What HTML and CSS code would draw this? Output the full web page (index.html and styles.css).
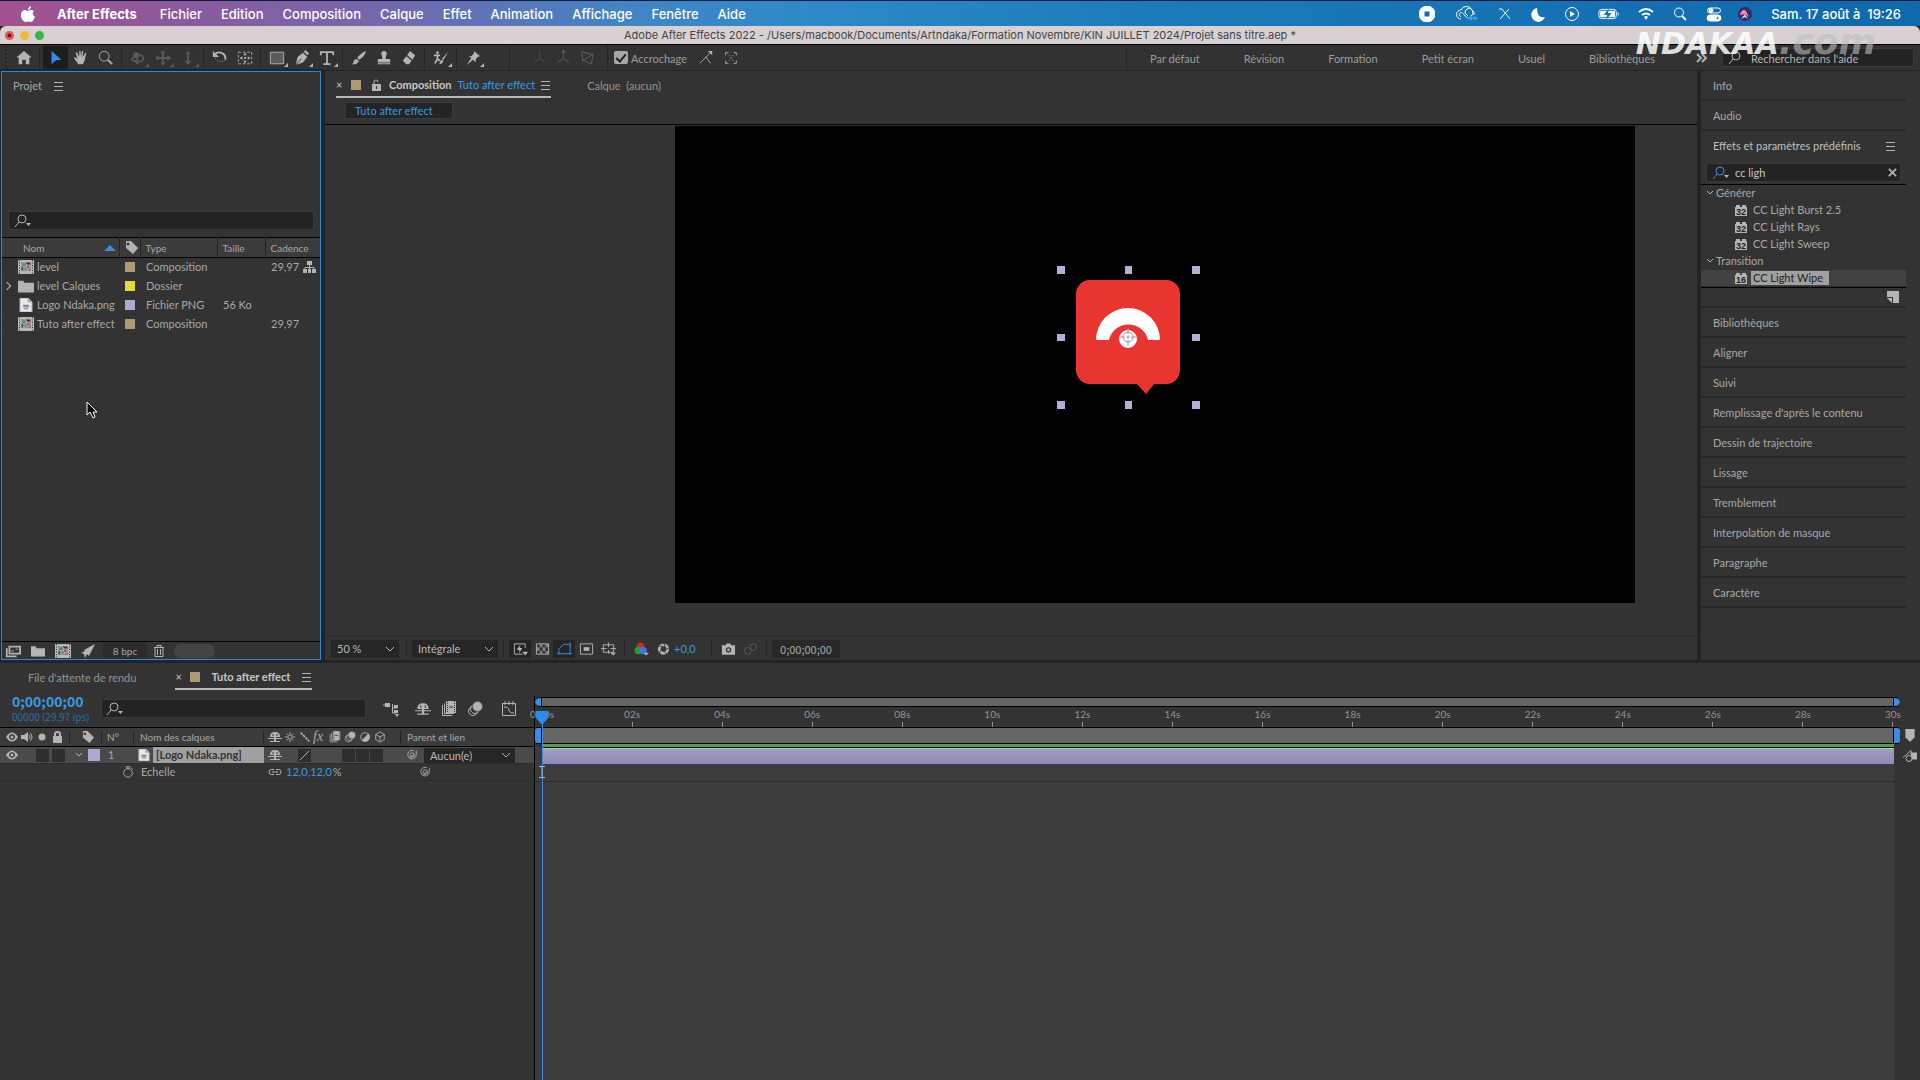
FILE: index.html
```
<!DOCTYPE html>
<html lang="fr">
<head>
    <meta charset="UTF-8">
    <meta name="viewport" content="width=device-width, initial-scale=1.0">
    <title>Adobe After Effects 2022 - Projet sans titre.aep</title>
    <link rel="stylesheet" href="styles.css">
</head>
<body>
    <!-- Shared icons -->
    <svg class="defs" aria-hidden="true">
        <symbol id="search" viewBox="0 0 18 14"><circle cx="8" cy="5" r="4"/><path d="M5 8L1 13"/><path class="solid" d="M12 9h5l-2.500 3z"/></symbol>
        <symbol id="menu" viewBox="0 0 10 10"><path d="M0 1.500h9M0 5.500h9M0 9.500h9"/></symbol>
        <symbol id="comp" viewBox="0 0 16 14"><path fill="#b9b9b9" d="M0 0h16v14H0z"/><path fill="#333" d="M3 2h10v9H3z"/><path stroke="#333" stroke-dasharray="1 1.500" d="M1.500 0v14M14.500 0v14"/><circle cx="6" cy="5" r="2.500" fill="#5b8a68"/><path fill="#bd4f45" d="M8 5h4v4H8z"/><path fill="#4678b8" d="M5 10l2.500-4 3 4z"/></symbol>
        <symbol id="folder" viewBox="0 0 15 12"><path class="solid" d="M0 1h5l1 2h9v9H0z"/></symbol>
        <symbol id="file" viewBox="0 0 12 14"><path fill="#e8e8ee" d="M0 0h8l4 4v10H0z"/><path fill="#9a9ab8" d="M8 0v4h4z"/><path fill="#485c9c" d="M3 7h6v2H3zM4 10h4v1H4z"/></symbol>
        <symbol id="tag" viewBox="0 0 13 13"><path class="solid" fill-rule="evenodd" d="M1 0h5l7 7-5 6-7-6zM3 1.500a1.500 1.500 0 1 0 .1 0z"/></symbol>
        <symbol id="eye" viewBox="0 0 12 10"><path class="solid" fill-rule="evenodd" d="M0 5q6-9 12 0-6 9-12 0zM6 2a3 3 0 1 0 .1 0z"/><circle class="solid" cx="6" cy="5" r="1.500"/></symbol>
        <symbol id="shy" viewBox="0 0 14 12"><path class="solid" d="M2 6q0-5 5-5t5 5zM6 6h2v5H6zM0 7h14v1H0zM2 10h10v1H2z"/><path stroke="#333" d="M5 3v2M9 3v2"/></symbol>
        <symbol id="frames" viewBox="0 0 16 16"><path d="M1.500 4v10.500H11M3.500 2.500v10H13"/><path class="solid" d="M5 0h10v12H5z"/><path stroke="#333" stroke-dasharray="1 1" d="M6.500 0v12M13.500 0v12"/><path stroke="#333" d="M8 6h4"/></symbol>
        <symbol id="blur" viewBox="0 0 16 16"><circle cx="6" cy="10" r="4.500"/><circle cx="8" cy="8" r="4.500"/><circle fill="#b4b4b4" cx="10.500" cy="5.500" r="5" stroke="#555"/></symbol>
        <symbol id="spiral" viewBox="0 0 14 12"><path d="M12 1v4a5 5 0 1 1-3-4M9 5.500a2 2 0 1 1-2-2 3 3 0 0 1 3 3 3.500 3.500 0 0 1-6 1"/></symbol>
        <symbol id="chev" viewBox="0 0 8 6"><path d="M1 1l3 3 3-3"/></symbol>
        <symbol id="brick" viewBox="0 0 12 11"><path class="solid" d="M0 2h1V0h4v2h2V0h4v2h1v9H0z"/></symbol>
    </svg>

    <header class="menubar">
        <nav>
            <svg class="apple" viewBox="0 0 14 16"><path fill="#fff" d="M10 0q0 3-3 4 0-3 3-4zM7 5q3-2 6 0-3 3 1 6-2 5-4 5-3-1-5 0-3 0-5-5-1-5 3-7 2 0 4 1z"/></svg>
            <a href="#" class="app">After Effects</a>
            <a href="#">Fichier</a>
            <a href="#">Edition</a>
            <a href="#">Composition</a>
            <a href="#">Calque</a>
            <a href="#">Effet</a>
            <a href="#">Animation</a>
            <a href="#">Affichage</a>
            <a href="#">Fenêtre</a>
            <a href="#">Aide</a>
        </nav>
        <div class="status">
            <svg viewBox="0 0 16 16"><circle cx="8" cy="8" r="8" fill="#fff"/><rect x="5" y="5" width="6" height="6" rx="1" fill="#156fb4"/></svg>
            <svg class="wide" viewBox="0 0 22 16"><path d="M5 13a4.500 4.500 0 0 1 0-9 6 6 0 0 1 11 0 4.500 4.500 0 0 1 2 5M5 10.500a2 2 0 1 1 2-3l5 5M15 10a4 4 0 1 0-6-3l3 3"/><path fill="#39a5ee" stroke="none" d="M14 9l4 3-4 3v-2h-3v-2h3zM22 12l-4 3v-5z"/></svg>
            <svg viewBox="0 0 16 16"><path d="M3 3h3l8 10M13 3L4 13"/></svg>
            <svg viewBox="0 0 16 16"><path class="white" d="M7 2a7 7 0 1 0 8 9Q7 13 7 2z"/></svg>
            <svg viewBox="0 0 16 16"><circle cx="8" cy="8" r="6.500"/><path class="white" d="M6 5l5 3-5 3z"/></svg>
            <svg class="wide" viewBox="0 0 24 14"><rect x="1" y="2" width="19" height="10" rx="3"/><rect x="3" y="4" width="15" height="6" fill="#fff"/><path fill="#1b70b2" stroke="none" d="M12 1L6 8h4l-1 5 6-7h-4z"/><path d="M22 5.500v3"/></svg>
            <svg viewBox="0 0 16 14"><path stroke-width="2" d="M1 5q7-6 14 0M4 8q4-3 8 0"/><path class="white" d="M6 10q2-2 4 0l-2 3z"/></svg>
            <svg viewBox="0 0 16 16"><circle cx="7" cy="6.500" r="4.500"/><path stroke-width="2" d="M10 10l4 4"/></svg>
            <svg class="center" viewBox="0 0 16 14"><rect x="1.500" y="1" width="13" height="5" rx="2.500"/><rect x="1" y="8" width="14" height="6" rx="3" fill="#fff"/><circle cx="5" cy="3.500" r="2" fill="#fff"/><circle cx="11.500" cy="11" r="1.500" fill="#1b70b2"/></svg>
            <svg viewBox="0 0 16 16"><circle cx="8" cy="8" r="7" fill="#3b2868" stroke="none"/><path fill="#f48cae" stroke="none" d="M3 9q2-7 6-4l3 6-4-3z"/><path fill="#b8eaff" stroke="none" d="M4 13l4-5 3 5-3-2z"/></svg>
            <time>Sam. 17 août à&nbsp; 19:26</time>
        </div>
    </header>

    <div class="titlebar">
        <div class="lights"><i class="red"></i><i class="yellow"></i><i class="green"></i></div>
        <h1>Adobe After Effects 2022 - /Users/macbook/Documents/Artndaka/Formation Novembre/KIN JUILLET 2024/Projet sans titre.aep *</h1>
    </div>
    <div class="watermark">NDAKAA<span>.com</span></div>

    <div class="toolbar">
        <div class="tools">
            <button aria-label="Accueil"><svg viewBox="0 0 18 18"><path class="solid" d="M9 1l8 7-1 1-1-1v8h-4v-5H7v5H3V8L2 9 1 8z"/></svg></button>
            <i class="sep"></i>
            <button class="active" aria-label="Sélection"><svg viewBox="0 0 18 18"><path d="M4 1l11 10-6 .5L4 16z" fill="#2d8ceb" stroke="none"/></svg></button>
            <button aria-label="Main"><svg viewBox="0 0 18 18"><path class="solid" d="M6 16L1 9l1-1 3 2L3 3l1.500-.5L7 8V1h1.500l.5 7 1-7h1.500L11 8l3-5 1 .5L13 12l-2 4z"/></svg></button>
            <button aria-label="Zoom"><svg viewBox="0 0 18 18"><circle cx="7" cy="7" r="5.500"/><path stroke-width="2" d="M11 11l5 5"/></svg></button>
            <i class="sep"></i>
            <button class="off more" aria-label="Orbite"><svg viewBox="0 0 18 18"><circle class="solid" cx="7" cy="6" r="3.500"/><path stroke-width="2" d="M4 8q-4 4 2 5h6q5-2 2-6l-3-2M9 10l-3 3 3 3"/></svg></button>
            <button class="off more" aria-label="Panoramique"><svg viewBox="0 0 18 18"><path stroke-width="2" d="M9 3v12M3 9h12"/><path class="solid" d="M9 0l3 4H6zM9 18l3-4H6zM0 9l4-3v6zM18 9l-4-3v6z"/></svg></button>
            <button class="off more" aria-label="Travelling"><svg viewBox="0 0 18 18"><path stroke-width="2" d="M9 3v12"/><path class="solid" d="M9 1l3 3H6zM9 17l4-5H5z"/></svg></button>
            <i class="sep"></i>
            <button aria-label="Rotation"><svg viewBox="0 0 18 18"><path stroke-width="2" d="M3 5a7 7 0 0 1 12 6"/><path stroke-dasharray="1 2" d="M15 11a7 7 0 0 1-12-4"/><path class="solid" d="M1 1v7h7z"/></svg></button>
            <button aria-label="Point d'ancrage"><svg viewBox="0 0 18 18"><path stroke-dasharray="3 2" d="M1.500 2.500h15v13h-15z"/><path class="solid" d="M9 3l2 3H7zM9 15l2-3H7zM3 9l3-2v4zM15 9l-3-2v4zM8 8h2v2H8z"/></svg></button>
            <i class="sep"></i>
            <button class="more" aria-label="Rectangle"><svg viewBox="0 0 18 18"><path fill="#5c5c5c" d="M1.500 2.500h15v13h-15z"/></svg></button>
            <button class="more" aria-label="Plume"><svg viewBox="0 0 18 18"><path class="solid" d="M2 17l2-9 6-5 5 5-5 6zM11 2l2-2 4 4-2 2z"/><path stroke="#333" d="M2 17l6-7"/></svg></button>
            <button class="more" aria-label="Texte"><svg viewBox="0 0 18 18"><path stroke-width="2" d="M2 6V2.500h14V6M9 3v13M5 16h8"/></svg></button>
            <i class="sep"></i>
            <button aria-label="Pinceau"><svg viewBox="0 0 18 18"><path class="solid" d="M17 1q-2 7-8 10L7 9q4-6 10-8zM6 10l3 2q-2 5-8 4 2-1 2-3t3-3z"/></svg></button>
            <button aria-label="Tampon"><svg viewBox="0 0 18 18"><path class="solid" d="M7 8q-3-7 2-7t2 7v2h5v4H2v-4h5zM2 15h14v1H2z"/></svg></button>
            <button aria-label="Gomme"><svg viewBox="0 0 18 18"><path class="solid" d="M10 1l6 5-3 5-6-5zM6 7l6 5-3 4H6l-4-4z"/></svg></button>
            <i class="sep"></i>
            <button class="more" aria-label="Roto-pinceau"><svg viewBox="0 0 18 18"><circle class="solid" cx="5" cy="3" r="1.500"/><path stroke-width="2" d="M1 6h7M5 5v5l-3 5M5 10l3 2"/><path class="solid" d="M17 2l-5 9-2-1zM9 11l3 1q-2 4-5 4z"/></svg></button>
            <i class="sep"></i>
            <button class="more" aria-label="Marionnette"><svg viewBox="0 0 18 18"><path class="solid" d="M10 1l7 6-3 1-2 3v3L9 11l-7 6 5-8-3-2h3l3-3z"/></svg></button>
        </div>
        <i class="sep"></i>
        <div class="axes">
            <svg class="blue" viewBox="0 0 18 18"><path d="M9 10V2M9 10l-6 4M9 10l6 4"/></svg>
            <svg viewBox="0 0 18 18"><path d="M9 10V2M9 10l-6 4M9 10l6 4M7 4l2-3 2 3"/></svg>
            <svg viewBox="0 0 18 18"><path d="M3 3l12 3-2 10L4 12zM4 12L15 6"/></svg>
        </div>
        <i class="sep"></i>
        <div class="snap">
            <input type="checkbox" id="snap" checked>
            <label for="snap">Accrochage</label>
            <svg viewBox="0 0 18 18"><path d="M2 15l7-7 5 7M8 9l6-6"/><path class="solid" d="M11 1h5v5z"/></svg>
            <svg viewBox="0 0 18 18"><path d="M3 6V3h3M12 3h3v3M15 12v3h-3M6 15H3v-3M7 6v1M11 6v1M7 11v1M11 11v1M9 8v2"/></svg>
        </div>
        <div class="workspaces">
            <a href="#">Par défaut</a>
            <a href="#">Révision</a>
            <a href="#">Formation</a>
            <a href="#">Petit écran</a>
            <a href="#">Usuel</a>
            <a href="#">Bibliothèques</a>
        </div>
        <button class="overflow" aria-label="Plus"><svg viewBox="0 0 12 10"><path stroke-width="2" d="M1 1l4 4-4 4M6 1l4 4-4 4"/></svg></button>
        <div class="field help">
            <svg viewBox="0 0 14 14"><circle cx="8" cy="5" r="4"/><path d="M5 8L1 13"/></svg>
            <input type="text" aria-label="Aide" placeholder="Rechercher dans l'aide">
        </div>
    </div>

    <main class="workspace">
        <section class="project">
            <h2>Projet <svg class="burger"><use href="#menu"/></svg></h2>
            <div class="field filter">
                <svg class="mag"><use href="#search"/></svg>
                <input type="text" aria-label="Filtrer le projet">
            </div>
            <table>
                <thead>
                    <tr><th class="c-name"><span>Nom <svg class="sort" viewBox="0 0 12 6"><path fill="#3a8de0" stroke="none" d="M6 0l6 6H0z"/></svg></span></th><th class="c-tag"><svg><use href="#tag"/></svg></th><th class="c-type">Type</th><th class="c-size">Taille</th><th class="c-rate">Cadence</th><th></th></tr>
                </thead>
                <tbody>
                    <tr><td><span class="item"><svg><use href="#comp"/></svg>level</span></td><td><i class="swatch tan"></i></td><td>Composition</td><td></td><td class="num">29,97</td><td><svg class="tree" viewBox="0 0 13 12"><path class="solid" d="M4 0h5v4H4zM0 8h4v4H0zM9 8h4v4H9zM5 8h3v4H5z"/><path d="M6.500 4v4M2 8V6.500h9V8"/></svg></td></tr>
                    <tr><td><span class="item parent"><svg><use href="#folder"/></svg>level Calques</span></td><td><i class="swatch yellow"></i></td><td>Dossier</td><td></td><td></td><td></td></tr>
                    <tr><td><span class="item"><svg><use href="#file"/></svg>Logo Ndaka.png</span></td><td><i class="swatch lilac"></i></td><td>Fichier PNG</td><td>56 Ko</td><td></td><td></td></tr>
                    <tr><td><span class="item"><svg><use href="#comp"/></svg>Tuto after effect</span></td><td><i class="swatch tan"></i></td><td>Composition</td><td></td><td class="num">29,97</td><td></td></tr>
                </tbody>
            </table>
            <svg class="cursor" viewBox="0 0 12 18"><path fill="#000" stroke="#fff" d="M1 1v13l3-3 3 6 2-1-2-5h4z"/></svg>
            <footer>
                <button aria-label="Interpréter"><svg viewBox="0 0 18 14"><path stroke-width="2" d="M2 4v9h11M5 2h12v8H5z"/><path d="M7 7h3M12 5h3"/></svg></button>
                <button aria-label="Nouveau dossier"><svg viewBox="-1 -1 17 14"><use href="#folder" width="15" height="12"/></svg></button>
                <button aria-label="Nouvelle composition"><svg viewBox="0 0 16 14"><use href="#comp" width="16" height="14"/></svg></button>
                <button aria-label="Paramètres"><svg viewBox="0 0 16 14"><path class="solid" d="M15 0L9 12l-2-2-2 4-1-4-3-1 4-2-1-1z"/></svg></button>
                <button class="bpc">8 bpc</button>
                <button class="trash" aria-label="Supprimer"><svg viewBox="0 0 14 14"><path d="M2 3.500h10M5 3V1.500h4V3M3 4v8.500h8V4M5.500 5v6M8.500 5v6"/></svg></button>
                <i class="scroll"></i>
            </footer>
        </section>

        <section class="viewer">
            <div class="tabs">
                <div class="tab current">
                    <span class="close">×</span><i class="swatch tan"></i>
                    <svg class="lock" viewBox="0 0 10 12"><path class="solid" d="M1 5h9v7H1z"/><path d="M3 5V3q0-2 2-2t2 2"/><path stroke="#333" d="M5.500 7v3"/></svg>
                    <b>Composition</b> <a href="#">Tuto after effect</a>
                    <svg class="burger"><use href="#menu"/></svg>
                </div>
                <div class="tab dim">Calque &nbsp;(aucun)</div>
            </div>
            <div class="crumbs"><button>Tuto after effect</button></div>
            <div class="canvas">
                <svg class="logo" viewBox="0 0 143 143">
                    <rect x="19" y="14" width="104" height="104" rx="14" fill="#e9352f"/>
                    <path fill="#e9352f" d="M79 117h19l-9 11z"/>
                    <path fill="#fff" d="M39 74a32 32 0 0 1 64 0H91a20 20 0 0 0-39 0z"/>
                    <circle cx="71" cy="73" r="9" fill="#fff"/>
                    <g fill="none" stroke="#99a"><circle cx="71" cy="71" r="5"/><circle cx="71" cy="71" r="1"/><path d="M71 62v6M71 74v6M62 71h6M74 71h6"/></g>
                    <path fill="#b3b0d6" d="M0 0h8v8H0zM68 0h7v8h-7zM135 0h8v8h-8zM0 68h8v7H0zM135 68h8v7h-8zM0 135h8v8H0zM68 135h7v8h-7zM135 135h8v8h-8z"/>
                </svg>
            </div>
            <footer>
                <select class="zoom" aria-label="Zoom"><option>50 %</option></select>
                <i class="sep"></i>
                <select class="quality" aria-label="Résolution"><option>Intégrale</option></select>
                <i class="sep"></i>
                <button class="dark" aria-label="Aperçu rapide"><svg viewBox="0 0 16 14"><path d="M13 6V1.500H1.500v11H10"/><path class="solid" d="M8 2L4 8h3l-1 4 4-6H7zM10 10h6l-3 4z"/></svg></button>
                <button aria-label="Transparence"><svg viewBox="0 0 16 14"><path d="M1.500 1.500h13v11h-13z"/><path class="solid" d="M5 2h3v3H5zM11 2h3v3h-3zM2 5h3v4H2zM8 5h3v4H8zM5 9h3v3H5zM11 9h3v3h-3z" opacity=".6"/></svg></button>
                <button class="dark blue" aria-label="Masques"><svg viewBox="0 0 16 14"><path d="M2 12V7l5-5h7v10zM0 12h4M12 12h4M14 0v4"/></svg></button>
                <button aria-label="Région"><svg viewBox="0 0 16 14"><path d="M1.500 1.500h13v11h-13z"/><path class="solid" d="M5 5h6v4H5z"/></svg></button>
                <button aria-label="Grille"><svg viewBox="0 0 16 14"><path d="M2.500 2.500h11v8h-11zM8 0v5M8 8v4M0 6.500h6M10 6.500h6"/><path class="solid" d="M10 11h6l-3 3z"/></svg></button>
                <i class="sep"></i>
                <button aria-label="Couches"><svg viewBox="0 0 16 14"><circle cx="7" cy="4" r="4" fill="#e11f1f" stroke="none"/><circle cx="4.500" cy="8.500" r="4" fill="#18a832" stroke="none"/><circle cx="9.500" cy="8.500" r="4" fill="#4a6fe0" stroke="none"/><path class="solid" d="M10 11h6l-3 3z"/></svg></button>
                <button aria-label="Exposition"><svg viewBox="0 0 16 14"><circle cx="8" cy="7" r="4.500" stroke-width="3"/><path stroke="#333" d="M8 0l2 5M15 5l-5 3M12 13l-4-4M3 12l3-5M1 4h6"/></svg></button>
                <output>+0,0</output>
                <i class="sep"></i>
                <button aria-label="Instantané"><svg viewBox="0 0 16 14"><path class="solid" fill-rule="evenodd" d="M1 3h4l1-2h4l1 2h4v10H1zM8 5a3 3 0 1 0 .1 0z"/><circle class="solid" cx="8" cy="8" r="1.500"/></svg></button>
                <button class="off" aria-label="Afficher l'instantané"><svg viewBox="0 0 16 14"><circle cx="5" cy="9" r="3.500"/><circle cx="11" cy="5" r="3.500"/></svg></button>
                <i class="sep"></i>
                <button class="time">0;00;00;00</button>
            </footer>
        </section>

        <aside class="panels">
            <h3>Info</h3>
            <h3>Audio</h3>
            <section class="effects">
                <h2>Effets et paramètres prédéfinis <svg class="burger"><use href="#menu"/></svg></h2>
                <div class="field">
                    <svg class="mag blue"><use href="#search"/></svg>
                    <input type="text" aria-label="Rechercher un effet" value="cc ligh">
                    <svg class="clear" viewBox="0 0 10 10"><path stroke-width="2" d="M1 1l8 8M9 1L1 9"/></svg>
                </div>
                <ul>
                    <li class="group"><svg><use href="#chev"/></svg>Générer</li>
                    <li><svg viewBox="0 0 12 11"><use href="#brick" width="12" height="11"/><text x="1" y="10" font-size="9">32</text></svg><span>CC Light Burst 2.5</span></li>
                    <li><svg viewBox="0 0 12 11"><use href="#brick" width="12" height="11"/><text x="1" y="10" font-size="9">32</text></svg><span>CC Light Rays</span></li>
                    <li><svg viewBox="0 0 12 11"><use href="#brick" width="12" height="11"/><text x="1" y="10" font-size="9">32</text></svg><span>CC Light Sweep</span></li>
                    <li class="group"><svg><use href="#chev"/></svg>Transition</li>
                    <li class="selected"><svg viewBox="0 0 12 11"><use href="#brick" width="12" height="11"/><text x="1" y="10" font-size="9">16</text></svg><span>CC Light Wipe</span></li>
                </ul>
                <div class="new"><svg viewBox="0 0 12 12"><path class="solid" d="M0 0h12v12H6V6H0zM0 7h5v5z"/></svg></div>
            </section>
            <h3>Bibliothèques</h3>
            <h3>Aligner</h3>
            <h3>Suivi</h3>
            <h3>Remplissage d'après le contenu</h3>
            <h3>Dessin de trajectoire</h3>
            <h3>Lissage</h3>
            <h3>Tremblement</h3>
            <h3>Interpolation de masque</h3>
            <h3>Paragraphe</h3>
            <h3>Caractère</h3>
        </aside>
    </main>

    <section class="timeline">
        <div class="layers">
            <div class="tabs">
                <div class="tab dim">File d'attente de rendu</div>
                <div class="tab current"><span class="close">×</span><i class="swatch tan"></i><b>Tuto after effect</b><svg class="burger"><use href="#menu"/></svg></div>
            </div>
            <div class="controls">
                <div class="timecode"><strong>0;00;00;00</strong><small>00000 (29.97 ips)</small></div>
                <div class="field">
                    <svg class="mag"><use href="#search"/></svg>
                    <input type="text" aria-label="Rechercher un calque">
                </div>
                <div class="switches">
                    <button aria-label="Mini-organigramme"><svg viewBox="0 0 16 16"><path d="M0 4h7M9.500 3v9H13M9 7h5"/><path class="solid" d="M2 2h5v4H2zM11 4h4v3h-4zM11 9h4v3h-4zM12 13h4l-2 3z"/></svg></button>
                    <button aria-label="Calques discrets"><svg><use href="#shy"/></svg></button>
                    <button aria-label="Fusion d'images"><svg><use href="#frames"/></svg></button>
                    <button aria-label="Flou de mouvement"><svg><use href="#blur"/></svg></button>
                    <button class="graph" aria-label="Éditeur de graphiques"><svg viewBox="0 0 16 16"><path d="M1.500 2.500h13v12h-13zM4 0v4M8 0v4M12 0v4M3 6q5 0 5 3t5 3"/></svg></button>
                </div>
            </div>
            <div class="row head">
                <span class="av">
                    <svg><use href="#eye"/></svg>
                    <svg viewBox="0 0 12 10"><path class="solid" d="M0 3h3l4-3v10L3 7H0z"/><path d="M8 3q2 2 0 4M9 1q4 4 0 8"/></svg>
                    <svg viewBox="0 0 12 10"><circle class="solid" cx="6" cy="5" r="3.500"/></svg>
                    <svg viewBox="0 0 12 12"><path class="solid" d="M2 5h9v7H2z"/><path stroke-width="2" d="M4 5V3q0-2 2.500-2T9 3v2"/></svg>
                </span>
                <span class="label"><svg><use href="#tag"/></svg></span>
                <span class="nr">N°</span>
                <span class="name">Nom des calques</span>
                <span class="sw">
                    <svg><use href="#shy"/></svg>
                    <svg viewBox="0 0 14 14"><circle cx="7" cy="7" r="2.500"/><path d="M7 1v3M7 10v3M1 7h3M10 7h3M3 3l2 2M9 9l2 2M11 3L9 5M5 9l-2 2"/></svg>
                    <svg viewBox="0 0 14 14"><path stroke-width="2" stroke-dasharray="3 1" d="M2 2l10 10"/></svg>
                    <em>fx</em>
                    <svg><use href="#frames"/></svg>
                    <svg><use href="#blur"/></svg>
                    <svg viewBox="0 0 14 14"><circle cx="7" cy="7" r="5"/><path class="solid" d="M3 11a5.500 5.500 0 0 0 8-8z"/></svg>
                    <svg viewBox="0 0 14 14"><path d="M7 1l5 3v6l-5 3-5-3V4zM2 4l5 3 5-3M7 7v6"/></svg>
                </span>
                <span class="link">Parent et lien</span>
            </div>
            <div class="row layer">
                <span class="av"><svg><use href="#eye"/></svg><i></i><i class="box"></i><i class="box"></i></span>
                <span class="label"><svg class="chev"><use href="#chev"/></svg><i class="swatch lilac"></i></span>
                <span class="nr">1</span>
                <span class="name"><svg><use href="#file"/></svg><b>[Logo Ndaka.png]</b></span>
                <span class="sw">
                    <svg><use href="#shy"/></svg><i></i>
                    <svg class="box" viewBox="0 0 14 14"><path d="M2 12L12 2"/></svg><i></i><i></i>
                    <i class="box"></i><i class="box"></i><i class="box"></i>
                </span>
                <span class="link"><svg><use href="#spiral"/></svg><select aria-label="Parent"><option>Aucun(e)</option></select></span>
            </div>
            <div class="row prop">
                <span class="name"><svg viewBox="0 0 12 14"><circle cx="6" cy="8" r="5"/><path d="M3 1h6M6 1v3M10 2l1 2"/></svg>Echelle</span>
                <span class="sw"><svg viewBox="0 0 14 8"><path d="M6 1.500H3.500a2.500 2.500 0 0 0 0 5H6M8 1.500h2.500a2.500 2.500 0 0 1 0 5H8M4 4h6"/></svg><a href="#">12,0,12,0</a>%</span>
                <span class="link"><svg><use href="#spiral"/></svg></span>
            </div>
        </div>

        <div class="tracks">
            <div class="navbar"></div>
            <ol class="ruler">
                <li>0:00s</li><li>02s</li><li>04s</li><li>06s</li><li>08s</li><li>10s</li><li>12s</li><li>14s</li>
                <li>16s</li><li>18s</li><li>20s</li><li>22s</li><li>24s</li><li>26s</li><li>28s</li><li>30s</li>
            </ol>
            <div class="workarea"></div>
            <div class="cache"></div>
            <div class="clip"></div>
            <div class="lane"></div>
            <div class="playhead"><svg viewBox="0 0 12 14"><path fill="#2d8ceb" stroke="none" d="M0 0h12v7l-6 7-6-7z"/></svg></div>
            <svg class="ibeam" viewBox="0 0 8 12"><path d="M1 .5h6M1 11.500h6M4 0v12"/></svg>
        </div>

        <div class="gutter">
            <svg viewBox="0 0 12 14"><path class="solid" d="M1 0h10v9l-5 5-5-5z"/></svg>
            <svg viewBox="0 0 14 12"><path class="solid" d="M8 2h6v7H8z"/><path d="M0 7l8-7v4"/><circle cx="6" cy="8" r="3" fill="#333"/></svg>
        </div>
    </section>
</body>
</html>
```
FILE: styles.css
```
/* Global Styles */
* {
    box-sizing: border-box;
}
body {
    font-family: Lato, "Noto Sans", sans-serif;
    font-size: 11px;
    line-height: 16px;
    background-color: #232323;
    color: #a8a8a8;
    margin: 0;
    min-height: 100vh;
    display: flex;
    flex-direction: column;
}
h1, h2, h3, ul, ol {
    margin: 0;
    padding: 0;
    font-size: inherit;
    font-weight: 400;
    list-style: none;
}
a {
    color: inherit;
    text-decoration: none;
}
button, input, select {
    font: inherit;
    color: inherit;
    background: none;
    border: 0;
    padding: 0;
    margin: 0;
}
svg {
    fill: none;
    stroke: #b4b4b4;
    flex: none;
    display: block;
}
svg text {
    fill: #222;
    stroke: none;
    font-family: "Liberation Sans", sans-serif;
    font-weight: 700;
}
.solid {
    fill: #b4b4b4;
    stroke: none;
}
.white {
    fill: #fff;
    stroke: none;
}
.defs {
    position: absolute;
    width: 0;
    height: 0;
}
.off {
    opacity: 0.3;
}
.blue {
    stroke: #3a8de0;
}
.blue svg {
    stroke: #3a8de0;
}
.sep {
    width: 1px;
    margin: 0 3px;
    align-self: stretch;
    background-color: #262626;
}
.swatch {
    display: block;
    width: 10px;
    height: 10px;
    flex: none;
}
.tan {
    background-color: #ae9b73;
}
.swatch.yellow {
    background-color: #e4d83a;
}
.lilac {
    background-color: #aca9d2;
}
.burger {
    width: 10px;
    height: 10px;
}
.mag {
    width: 18px;
    height: 14px;
}
.field {
    display: flex;
    align-items: center;
    height: 19px;
    background-color: #232323;
    border: 1px solid #3a3a3a;
    border-radius: 2px;
}
.field input {
    flex: 1;
    min-width: 0;
    outline: 0;
}

/* Menu bar */
.menubar {
    display: flex;
    justify-content: space-between;
    height: 26px;
    padding: 0 19px 0 21px;
    border-top: 1px solid #101a3c;
    background: linear-gradient(90deg, #a3518f 0%, #8a5aa0 10%, #7468ac 20%, #4384c4 32%, #2e8ac8 42%, #1b7bba 60%, #0f69ad 100%);
    color: #fff;
    font: 500 13px/24px Inter, sans-serif;
}
.menubar nav, .status {
    display: flex;
    align-items: center;
}
.menubar nav {
    gap: 19px;
}
.menubar .app {
    font-weight: 700;
    margin: 0 4px 0 3px;
}
.apple {
    width: 14px;
    height: 16px;
    stroke: none;
}
.status svg {
    width: 16px;
    height: 16px;
    margin-right: 18px;
    stroke: #fff;
}
.status svg:first-child {
    margin-right: 21px;
}
.status svg.wide {
    width: 22px;
}
.status svg.center {
    margin-right: 15px;
}
.titlebar {
    display: flex;
    align-items: center;
    height: 19px;
    background-color: #d8d0d3;
    color: #444;
    border-radius: 6px 6px 0 0;
    border-bottom: 1px solid #000;
    padding: 0 5px;
}
.titlebar h1 {
    flex: 1;
    text-align: center;
    font: 400 11px/18px Inter, sans-serif;
}
.lights {
    display: flex;
    gap: 6px;
    width: 0;
}
.lights i {
    width: 9px;
    height: 9px;
    border-radius: 50%;
    flex: none;
}
.lights .red {
    background: radial-gradient(#5c0c0c 25%, #e85550 35%);
}
.lights .yellow {
    background-color: #f3b63c;
}
.lights .green {
    background-color: #34b84a;
}
.watermark {
    position: absolute;
    top: 29px;
    right: 44px;
    font: italic 700 30px/26px "DejaVu Sans", sans-serif;
    color: rgba(255, 255, 255, 0.85);
    pointer-events: none;
}
.watermark span {
    font-size: 36px;
    color: rgba(190, 190, 190, 0.6);
}

/* Toolbar */
.toolbar {
    display: flex;
    align-items: center;
    height: 25px;
    background-color: #323232;
    padding-right: 6px;
    color: #9c9c9c;
}
.tools {
    display: flex;
    align-items: center;
    height: 24px;
    padding-left: 4px;
    margin-left: 5px;
    margin-right: 21px;
    border-left: 2px dotted #262626;
}
.tools button {
    position: relative;
    width: 25px;
    height: 24px;
    display: flex;
    align-items: center;
    justify-content: center;
}
.tools .active {
    background-color: #1d1d1d;
}
.tools svg {
    width: 16px;
    height: 16px;
}
.tools .more::after {
    content: "";
    position: absolute;
    right: 1px;
    bottom: 3px;
    border: 2px solid;
    border-color: transparent #b4b4b4 #b4b4b4 transparent;
}
.axes, .snap {
    display: flex;
    align-items: center;
}
.axes {
    gap: 7px;
    padding: 0 8px 0 18px;
    opacity: 0.35;
}
.axes svg {
    width: 17px;
    height: 17px;
}
.snap {
    flex: 1;
    padding-left: 3px;
    height: 24px;
    border-right: 1px solid #262626;
}
.snap input {
    appearance: none;
    width: 14px;
    height: 13px;
    background-color: #a8a8a8;
    border-radius: 2px;
    margin-right: 3px;
}
.snap input:checked::after {
    content: "";
    display: block;
    width: 4px;
    height: 8px;
    margin: 1px 4px;
    border: solid #222;
    border-width: 0 2px 2px 0;
    transform: rotate(40deg);
}
.snap svg {
    width: 16px;
    height: 16px;
    margin-left: 9px;
}
.snap label {
    margin-right: 2px;
    padding-top: 2px;
}
.workspaces {
    display: flex;
    gap: 44px;
    padding: 2px 41px 0 23px;
}
.overflow svg {
    width: 12px;
    height: 10px;
}
.help {
    width: 192px;
    margin-left: 14px;
    padding-left: 5px;
    color: #b4b4b4;
}
.help svg {
    width: 14px;
    height: 14px;
    margin-right: 9px;
}
.help input {
    padding-top: 2px;
}
.help input::placeholder {
    color: #b4b4b4;
}

/* Panels */
.workspace {
    display: grid;
    grid-template-columns: 321px 1fr 219px;
    gap: 4px;
    padding-top: 1px;
    min-height: 590px;
}
.project, .viewer, .panels {
    background-color: #333;
    display: flex;
    flex-direction: column;
}
.workspace h2 {
    display: flex;
    align-items: center;
    gap: 12px;
}
.project {
    position: relative;
    border: 1px solid #3e85c4;
    box-shadow: 0 0 0 2px #14273c;
    margin-left: 1px;
}
.project h2 {
    height: 28px;
    padding-left: 11px;
}
.project .filter {
    margin: 111px 6px 7px;
    padding-left: 5px;
}
.project table {
    width: 100%;
    border-collapse: collapse;
    table-layout: fixed;
}
.project thead {
    background-color: #3b3b3b;
    border-top: 1px solid #000;
    border-bottom: 1px solid #000;
}
.project th {
    height: 20px;
    padding: 0 0 0 5px;
    font-size: 10px;
    font-weight: 400;
    text-align: left;
    border-right: 1px solid #222;
}
.project th:last-child {
    border: 0;
}
.project th span {
    display: flex;
    justify-content: space-between;
    align-items: center;
    padding: 0 3px 0 16px;
}
.sort {
    width: 12px;
    height: 6px;
}
.c-name {
    width: 117px;
}
.c-tag {
    width: 21px;
}
.c-tag svg {
    width: 13px;
    height: 13px;
}
.c-type {
    width: 77px;
}
.c-size {
    width: 48px;
}
.c-rate {
    width: 38px;
    border: 0 !important;
}
.project td {
    height: 19px;
    padding: 0 0 0 6px;
    border-bottom: 1px solid #2f2f2f;
    white-space: nowrap;
}
.project td:first-child {
    padding-left: 16px;
}
.project td:last-child {
    padding-left: 0;
}
.item {
    display: flex;
    align-items: center;
    gap: 3px;
    position: relative;
}
.item svg {
    width: 16px;
    height: 14px;
}
.parent::before {
    content: "";
    position: absolute;
    left: -14px;
    width: 5px;
    height: 5px;
    border: solid #b4b4b4;
    border-width: 1px 1px 0 0;
    transform: rotate(45deg);
}
.tree {
    width: 13px;
    height: 12px;
}
.cursor {
    position: absolute;
    left: 84px;
    top: 329px;
    width: 12px;
    height: 18px;
}
.project footer {
    display: flex;
    align-items: center;
    margin-top: auto;
    height: 18px;
    border-top: 1px solid #000;
    padding-left: 3px;
    gap: 9px;
}
.project footer svg {
    width: 16px;
    height: 14px;
}
.bpc {
    width: 44px;
    height: 16px;
    font-size: 10px;
    background-color: #2b2b2b;
    margin: 0 -5px 0 -2px;
}
.trash {
    margin-right: -2px;
}
.scroll {
    width: 41px;
    height: 14px;
    border-radius: 7px;
    background-color: #444;
}

/* Composition viewer */
.tabs {
    display: flex;
    align-items: center;
}
.tab {
    display: flex;
    align-items: center;
    height: 24px;
}
.current {
    border-bottom: 2px solid #b8b8b8;
    color: #c8c8c8;
}
.current b {
    font-weight: 700;
}
.current a {
    color: #3a9be4;
}
.dim {
    color: #949494;
}
.close {
    width: 15px;
}
.viewer {
    min-width: 0;
}
.viewer .tabs {
    padding: 3px 0 0 11px;
}
.lock {
    width: 10px;
    height: 12px;
    margin: 0 8px 0 10px;
}
.viewer b {
    margin-right: 6px;
}
.current .burger {
    margin-left: 6px;
}
.viewer .dim {
    margin-left: 36px;
}
.crumbs {
    padding: 4px 20px 5px;
    border-bottom: 1px solid #000;
}
.crumbs button {
    display: block;
    width: 108px;
    height: 17px;
    padding-left: 9px;
    text-align: left;
    line-height: 14px;
    color: #3a9be4;
    background-color: #242424;
    border: 1px solid #3a3a3a;
}
.canvas {
    position: relative;
    flex: 1;
    min-height: 477px;
    margin: 1px 62px 33px 350px;
    background-color: #000;
}
.logo {
    position: absolute;
    left: calc(50% - 98px);
    top: 140px;
    width: 143px;
    height: 143px;
    stroke: none;
}
.viewer footer {
    display: flex;
    align-items: center;
    height: 24px;
    padding-left: 6px;
    border-top: 1px solid #2a2a2a;
}
select {
    appearance: none;
    height: 18px;
    padding-left: 6px;
    color: #b8b8b8;
    background-color: #262626;
    background-image: linear-gradient(45deg, transparent 45%, #b4b4b4 45%, #b4b4b4 60%, transparent 60%), linear-gradient(-45deg, transparent 45%, #b4b4b4 45%, #b4b4b4 60%, transparent 60%);
    background-repeat: no-repeat;
    background-size: 4px 4px;
    background-position: right 9px center, right 5px center;
}
.zoom {
    width: 68px;
    margin-right: 2px;
}
.quality {
    width: 86px;
}
.viewer footer .sep {
    margin: 3px 5px;
}
.viewer footer button {
    width: 22px;
    height: 18px;
    display: flex;
    align-items: center;
    justify-content: center;
}
.viewer footer svg {
    width: 15px;
    height: 14px;
}
.viewer footer .dark {
    background-color: #252525;
}
.viewer output {
    color: #3a9be4;
    width: 32px;
}
.viewer footer .time {
    width: 68px;
    background-color: #282828;
    font-family: "Noto Sans CJK SC", sans-serif;
}

/* Right column */
.panels {
    padding-right: 14px;
}
.panels h3 {
    height: 30px;
    line-height: 30px;
    padding-left: 12px;
    border-bottom: 2px solid #282828;
}
.effects {
    border-bottom: 2px solid #282828;
}
.effects h2 {
    height: 32px;
    padding: 0 10px 3px 12px;
    justify-content: space-between;
    color: #c0c0c0;
}
.effects .field {
    margin: 0 5px 2px;
    padding: 0 3px 0 5px;
    color: #c8c8c8;
}
.effects .field input {
    margin-left: 5px;
}
.effects .blue .solid {
    fill: #3a8de0;
}
.clear {
    width: 9px;
    height: 9px;
}
.effects ul {
    border-top: 1px solid #000;
    border-bottom: 1px solid #000;
}
.effects li {
    display: flex;
    align-items: center;
    height: 17px;
    padding-left: 34px;
    border-bottom: 1px solid #2f2f2f;
}
.effects li svg {
    width: 12px;
    height: 11px;
    margin-right: 4px;
}
.effects li.group {
    padding-left: 5px;
}
.effects .group svg {
    width: 8px;
    height: 6px;
    margin-right: 2px;
}
.effects li span {
    padding: 0 6px 0 2px;
}
.effects .selected {
    background-color: #424242;
}
.effects .selected span {
    line-height: 14px;
    background-color: #a0a0a0;
    color: #222;
}
.new {
    display: flex;
    justify-content: flex-end;
    padding: 3px 7px;
}
.new svg {
    width: 12px;
    height: 12px;
}

/* Timeline */
.timeline {
    flex: 1;
    display: grid;
    grid-template-columns: 535px 1fr 20px;
    margin-top: 3px;
    background-color: #333;
}
.layers {
    border-right: 1px solid;
    border-image: linear-gradient(#333 34px, #000 34px) 1;
}
.timeline .tabs {
    padding: 3px 0 0 28px;
    color: #c0c0c0;
}
.timeline .tab.current {
    margin-left: 39px;
}
.timeline .tab b {
    margin: 0 6px 0 11px;
}
.controls {
    display: flex;
    align-items: center;
    height: 37px;
    padding-left: 12px;
}
.timecode {
    width: 89px;
    color: #3a9be4;
    font-family: "Noto Sans CJK SC", sans-serif;
    line-height: 15px;
    white-space: nowrap;
}
.timecode strong, .timecode small {
    display: block;
}
.timecode strong {
    font-size: 14px;
}
.timecode small {
    font-size: 10px;
    color: #2c6ea8;
}
.controls .field {
    width: 265px;
    padding-left: 4px;
}
.switches {
    display: flex;
    gap: 10px;
    margin-left: 17px;
}
.switches svg {
    width: 16px;
    height: 16px;
}
.switches button:first-child {
    margin-right: 6px;
}
.switches .graph {
    margin-left: 8px;
}
.row {
    display: grid;
    grid-template-columns: 70px 32px 32px 130px 137px 1fr;
    align-items: center;
    height: 17px;
    border-bottom: 1px solid #2d2d2d;
}
.row > span {
    display: flex;
    align-items: center;
}
.row svg {
    width: 12px;
    height: 12px;
}
.head {
    height: 20px;
    background-color: #3b3b3b;
    border-top: 1px solid #000;
    border-bottom: 1px solid #000;
    font-size: 10px;
}
.head > span {
    height: 12px;
    border-right: 1px solid #222;
}
.row > .link {
    border: 0;
}
.av {
    padding-left: 6px;
    gap: 3px;
}
.av i {
    width: 12px;
    height: 12px;
}
.row .box {
    width: 13px;
    height: 13px;
    background-color: #2e2e2e;
}
.head .label {
    padding-left: 12px;
}
.nr {
    padding-left: 5px;
}
.name {
    padding-left: 6px;
}
.sw {
    padding-left: 4px;
    gap: 1px;
}
.sw svg, .sw i {
    width: 14px;
}
.sw em {
    width: 14px;
    font: italic 14px/12px "Liberation Serif", serif;
}
.head .link {
    padding-left: 6px;
}
.layer {
    background-color: #4a4a4a;
}
.layer .label {
    gap: 5px;
    padding-left: 5px;
}
.layer .label svg {
    width: 8px;
    height: 6px;
}
.layer .swatch {
    width: 12px;
    height: 12px;
}
.layer .nr {
    padding-left: 6px;
}
.layer .name {
    padding-left: 4px;
    gap: 3px;
}
.layer .name b {
    flex: 1;
    padding-left: 3px;
    font-weight: 700;
    line-height: 16px;
    background-color: #a0a0a0;
    color: #333;
}
.layer .link {
    gap: 6px;
    padding-left: 5px;
}
.layer select {
    width: 91px;
    height: 15px;
}
.prop .name {
    grid-column: 1 / 5;
    padding-left: 122px;
    gap: 7px;
}
.prop .sw a {
    margin-left: 3px;
    color: #3a9be4;
}
.prop .sw svg {
    height: 8px;
}
.prop .link {
    padding-left: 18px;
}

/* Time ruler and tracks */
.tracks {
    position: relative;
    display: flex;
    flex-direction: column;
    padding-top: 34px;
    background: linear-gradient(90deg, transparent calc(100% - 6px), #333 calc(100% - 6px)), linear-gradient(#333 84px, #3c3c3c 84px);
}
.navbar, .workarea {
    border: 1px solid #000;
    border-width: 1px 0;
    background: linear-gradient(90deg, #3a8de0 6px, #000 6px, #000 7px, #656565 7px, #656565 calc(100% - 7px), #000 calc(100% - 7px), #000 calc(100% - 6px), #3a8de0 calc(100% - 6px));
}
.navbar {
    height: 10px;
    border-radius: 5px;
}
.workarea {
    height: 17px;
    border-radius: 3px;
}
.ruler {
    display: flex;
    justify-content: space-between;
    margin: 0 7px;
    height: 20px;
    font-size: 10px;
    color: #949494;
}
.ruler li {
    width: 0;
    display: flex;
    flex-direction: column;
    align-items: center;
    line-height: 15px;
    white-space: nowrap;
}
.ruler li::after {
    content: "";
    width: 1px;
    height: 5px;
    background-color: #949494;
}
.cache {
    height: 4px;
    margin: 0 6px 0 7px;
    background-color: #4fa053;
    border-bottom: 1px solid #000;
}
.clip {
    height: 17px;
    margin: 0 6px 0 7px;
    border-top: 1px solid #9be09b;
    border-bottom: 1px solid #3a3870;
    background: linear-gradient(#a29dc6, #8f8ab4);
}
.lane {
    height: 17px;
    border-bottom: 1px solid #2d2d2d;
}
.playhead {
    position: absolute;
    top: 48px;
    bottom: 0;
    left: 1px;
    width: 12px;
    background: linear-gradient(90deg, transparent 6px, #3a8de0 6px, #3a8de0 7px, transparent 7px);
}
.playhead svg {
    width: 12px;
    height: 14px;
}
.ibeam {
    position: absolute;
    left: 3px;
    top: 103px;
    width: 8px;
    height: 12px;
}
.gutter {
    display: flex;
    flex-direction: column;
    gap: 8px;
    padding: 66px 0 0 3px;
}
.gutter svg {
    width: 14px;
    height: 13px;
}
```
